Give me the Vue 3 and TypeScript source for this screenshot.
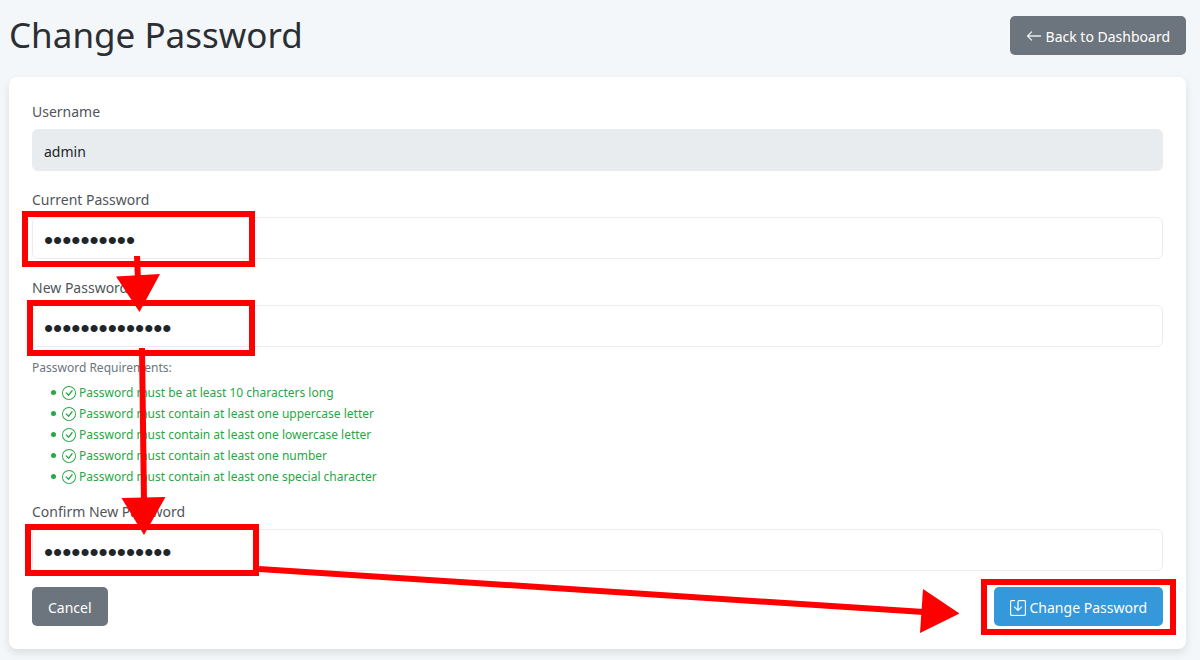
<script setup lang="ts">
import { ref } from 'vue'

const username = ref('admin')
const currentPassword = ref('abcdefghij')
const newPassword = ref('Abcdefghijk12!')
const confirmPassword = ref('Abcdefghijk12!')

const requirements: string[] = [
  'Password must be at least 10 characters long',
  'Password must contain at least one uppercase letter',
  'Password must contain at least one lowercase letter',
  'Password must contain at least one number',
  'Password must contain at least one special character',
]
</script>

<template>
  <main class="page">
    <header class="header">
      <h1>Change Password</h1>
      <a class="btn secondary" href="#">
        <svg class="icon" viewBox="0 0 16 16" aria-hidden="true">
          <path fill-rule="evenodd" d="M15 8a.5.5 0 0 0-.5-.5H2.707l3.147-3.146a.5.5 0 1 0-.708-.708l-4 4a.5.5 0 0 0 0 .708l4 4a.5.5 0 0 0 .708-.708L2.707 8.5H14.5A.5.5 0 0 0 15 8z" />
        </svg>
        Back to Dashboard
      </a>
    </header>

    <form class="card" @submit.prevent>
      <div class="field">
        <label for="username">Username</label>
        <input id="username" v-model="username" type="text" readonly />
      </div>
      <div class="field">
        <label for="current">Current Password</label>
        <input id="current" v-model="currentPassword" type="password" />
      </div>
      <div class="field">
        <label for="new">New Password</label>
        <input id="new" v-model="newPassword" type="password" />
        <div class="rules">
          <p>Password Requirements:</p>
          <ul>
            <li v-for="rule in requirements" :key="rule">
              <svg class="check" viewBox="0 0 16 16" aria-hidden="true">
                <path d="M8 15A7 7 0 1 1 8 1a7 7 0 0 1 0 14zm0 1A8 8 0 1 0 8 0a8 8 0 0 0 0 16z" />
                <path d="M10.97 4.97a.235.235 0 0 0-.02.022L7.477 9.417 5.384 7.323a.75.75 0 0 0-1.06 1.06L6.97 11.03a.75.75 0 0 0 1.079-.02l3.992-4.99a.75.75 0 0 0-1.071-1.05z" />
              </svg>
              <span>{{ rule }}</span>
            </li>
          </ul>
        </div>
      </div>
      <div class="field">
        <label for="confirm">Confirm New Password</label>
        <input id="confirm" v-model="confirmPassword" type="password" />
      </div>
      <div class="actions">
        <button class="btn secondary" type="button">Cancel</button>
        <button class="btn primary" type="submit">
          <svg class="icon" viewBox="0 0 16 16" aria-hidden="true">
            <path d="M2 1a1 1 0 0 0-1 1v12a1 1 0 0 0 1 1h12a1 1 0 0 0 1-1V2a1 1 0 0 0-1-1H9.5a1 1 0 0 0-1 1v7.293l2.646-2.647a.5.5 0 0 1 .708.708l-3.5 3.5a.5.5 0 0 1-.708 0l-3.5-3.5a.5.5 0 1 1 .708-.708L7.5 9.293V2a2 2 0 0 1 2-2H14a2 2 0 0 1 2 2v12a2 2 0 0 1-2 2H2a2 2 0 0 1-2-2V2a2 2 0 0 1 2-2h2.5a.5.5 0 0 1 0 1H2z" />
          </svg>
          Change Password
        </button>
      </div>
    </form>

    <svg class="guide" width="1200" height="660" viewBox="0 0 1200 660" aria-hidden="true">
      <g fill="none" stroke="#ff0000" stroke-width="6">
        <rect x="25" y="214" width="227" height="50" />
        <rect x="30" y="303" width="222" height="50" />
        <rect x="28" y="527" width="228" height="46" />
        <rect x="984" y="582" width="189" height="50" />
        <path d="M137 256 L138 280" />
        <path d="M142 348 L144 502" />
        <path d="M259 569 L924 612" />
      </g>
      <g fill="#ff0000">
        <path d="M116 276.500 L160 274 L139.500 312 Z" />
        <path d="M121.500 498 L165.500 497 L144 535 Z" />
        <path d="M923 589 L959.500 613.500 L920 633 Z" />
      </g>
    </svg>
  </main>
</template>

<style>
body {
  margin: 0;
  background: #f4f7fa;
}
</style>

<style scoped>
.page,
.page * {
  box-sizing: border-box;
}

.page {
  position: relative;
  min-height: 100vh;
  padding: 12px 14px 11px 9px;
  overflow: hidden;
  background: #f4f7fa;
  color: #2b2f33;
  font-family: "Noto Sans", "Open Sans", sans-serif;
  font-size: 14px;
}

.header {
  display: flex;
  align-items: center;
  justify-content: space-between;
  margin-bottom: 19px;
}

h1 {
  margin: 0;
  font-size: 35px;
  font-weight: 400;
  line-height: 46px;
}

.btn {
  display: flex;
  align-items: center;
  gap: 4px;
  padding: 9px 16px 7px;
  border: 0;
  border-radius: 5px;
  color: #fff;
  font: inherit;
  line-height: 23px;
  text-decoration: none;
}

.secondary {
  background: #6c757d;
}

.primary {
  background: #3498db;
}

.icon {
  width: 16px;
  height: 16px;
  fill: currentColor;
  stroke: currentColor;
  stroke-width: 0.3;
}

.card {
  padding: 22px 23px 23px;
  border-radius: 8px;
  background: #fff;
  box-shadow: 0 4px 8px rgba(0, 0, 0, 0.1);
}

.field {
  display: flex;
  flex-direction: column;
  margin-bottom: 16px;
}

label {
  margin-bottom: 4px;
  color: #505559;
  line-height: 26px;
}

input {
  width: 100%;
  height: 42px;
  padding: 2px 11px 0;
  border: 1px solid #ececee;
  border-radius: 6px;
  outline: 0;
  background: #fff;
  color: #212529;
  font: inherit;
}

input[readonly] {
  border-color: #e9ecef;
  background: #e9ecef;
}

input[type="password"] {
  padding-top: 4px;
  font-family: "Liberation Sans", sans-serif;
  font-size: 26px;
}

.rules {
  margin: 11px 0 -4px;
  font-size: 12px;
}

.rules p {
  margin: 0;
  color: #6c757d;
  line-height: 20px;
}

ul {
  margin: 4px 0 0;
  padding-left: 19px;
  color: #28a745;
  list-style: none;
}

li {
  display: flex;
  align-items: center;
  line-height: 21px;
}

li::before {
  width: 5px;
  height: 5px;
  margin-right: 6px;
  border-radius: 50%;
  background: currentColor;
  content: "";
}

.check {
  width: 14px;
  height: 14px;
  margin-right: 3px;
  fill: currentColor;
}

.actions {
  display: flex;
  justify-content: space-between;
}

.guide {
  position: absolute;
  top: 0;
  left: 0;
  pointer-events: none;
}
</style>
